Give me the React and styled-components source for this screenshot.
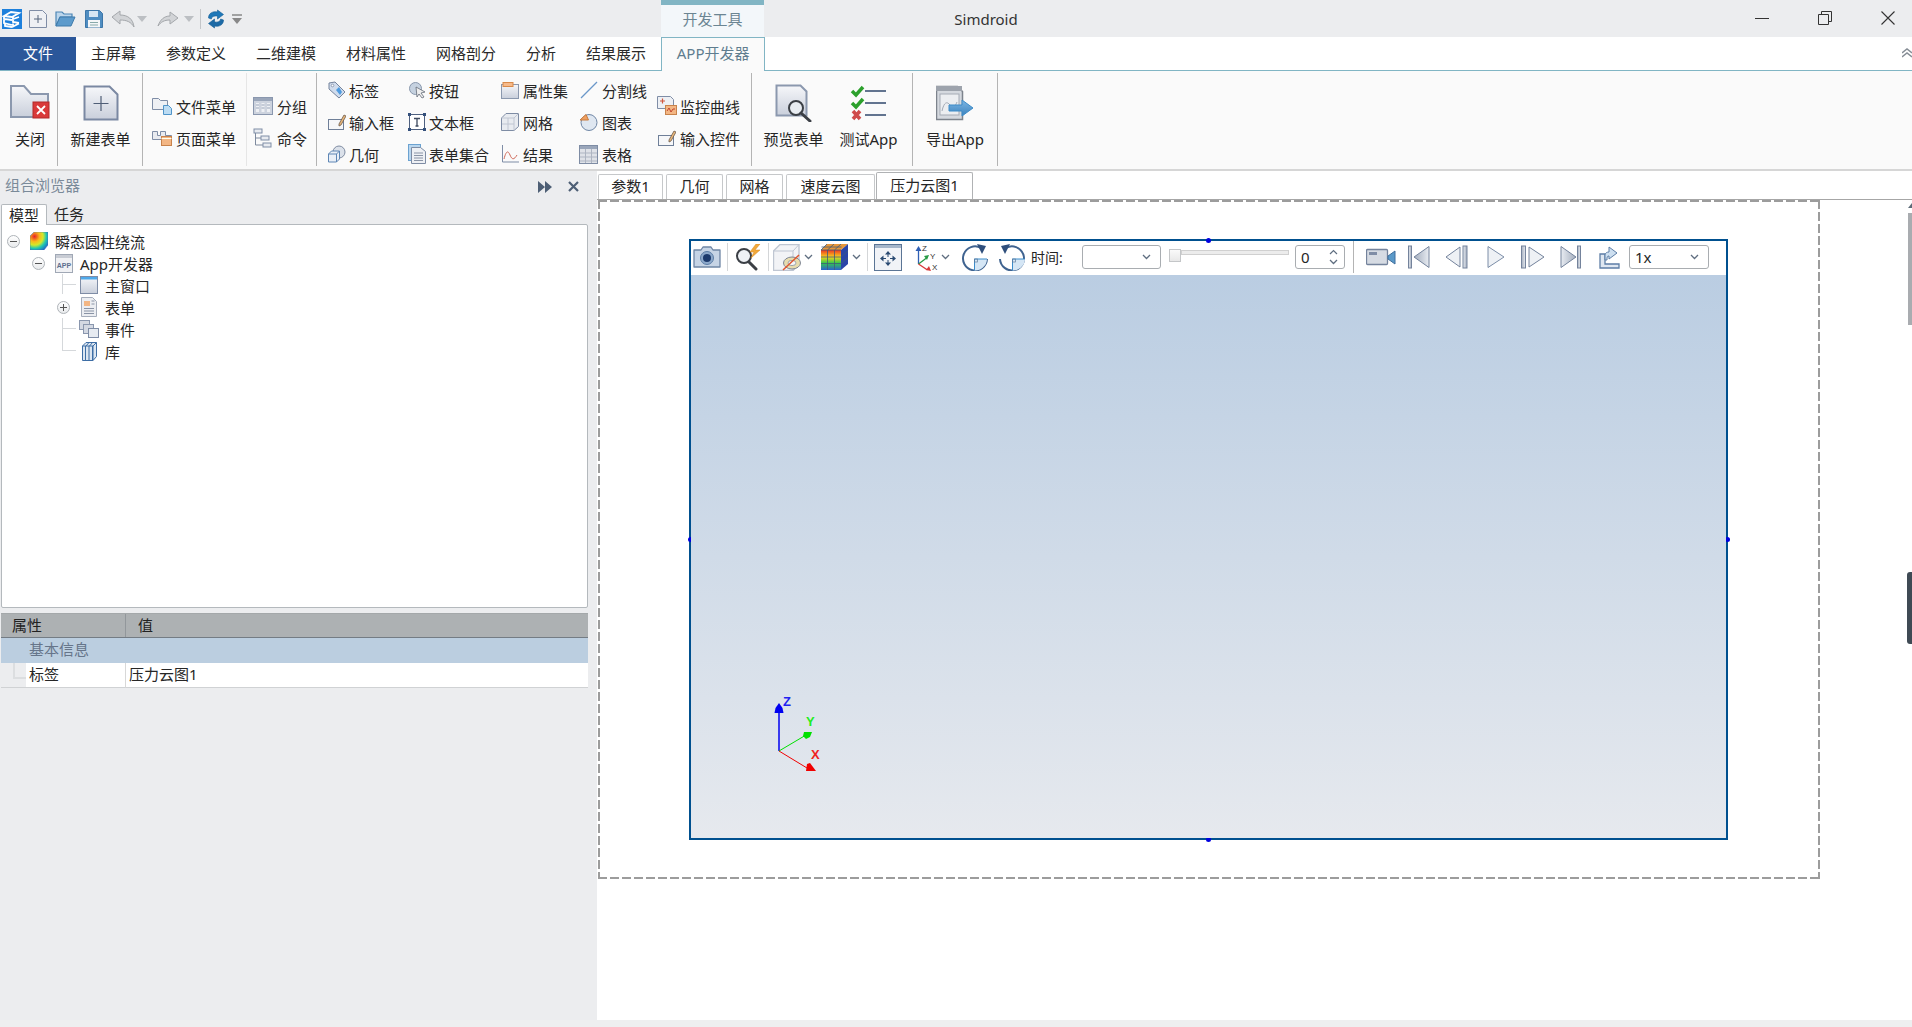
import React from 'react';
import styled, { createGlobalStyle } from 'styled-components';

const Global = createGlobalStyle`
  html, body { margin: 0; padding: 0; background: #fff; }
  body { font-family: "Noto Sans", "Noto Sans CJK SC", sans-serif; font-size: 15px; color: #262626; }
  svg { display: block; flex-shrink: 0; }
`;

const Root = styled.div`width:1912px;height:1027px;overflow:hidden;display:flex;flex-direction:column;background:#ecedef;`;

/* ---------- title bar ---------- */
const TitleBar = styled.div`height:37px;display:flex;background:#ecedef;flex-shrink:0;`;
const Qat = styled.div`width:661px;display:flex;align-items:center;padding:0 0 0 2px;box-sizing:border-box;`;
const QatItem = styled.div`margin-left:${p => p.$ml || 0}px;`;
const QatSep = styled.div`width:1px;height:20px;background:#c4c6c9;margin-left:6px;`;
const ContextTab = styled.div`width:103px;border-top:5px solid #81b5c4;background:#f3f7fa;color:#6b8592;display:flex;align-items:center;justify-content:center;font-size:15px;box-sizing:border-box;padding-bottom:6px;`;
const AppTitle = styled.div`width:444px;text-align:center;line-height:38px;font-size:15px;color:#333;`;
const WinControls = styled.div`margin-left:auto;display:flex;align-items:center;gap:49px;padding-right:17px;padding-top:0;height:36px;`;

/* ---------- menu tabs ---------- */
const MenuBar = styled.div`height:34px;background:#fff;display:flex;flex-shrink:0;border-bottom:1px solid #81b5c4;box-sizing:border-box;position:relative;`;
const FileTab = styled.div`width:76px;background:#2b579a;color:#fff;text-align:center;line-height:32px;height:33px;`;
const MenuTab = styled.div`padding:0 15px;line-height:32px;height:33px;color:#2a2a2a;`;
const ActiveTab = styled(MenuTab)`
  width:104px;padding:0;box-sizing:border-box;text-align:center;color:#5f7d8f;background:#fafafa;height:34px;
  border:1px solid #81b5c4;border-bottom:none;line-height:30px;
`;
const Collapse = styled.div`position:absolute;right:0;top:11px;`;

/* ---------- ribbon ---------- */
const Ribbon = styled.div`height:100px;background:#fafafa;display:flex;flex-shrink:0;border-bottom:2px solid #d6d6d6;box-sizing:border-box;`;
const Group = styled.div`width:${p => p.$w}px;padding-left:${p => p.$pl || 0}px;box-sizing:border-box;display:flex;flex-shrink:0;`;
const RibbonSep = styled.div`width:1px;margin:2px 0 3px;background:${p => p.$faint ? '#e6e6e6' : '#b4b4b4'};flex-shrink:0;`;
const LargeBtn = styled.div`
  width:${p => p.$w}px;display:flex;flex-direction:column;align-items:center;padding-top:12px;box-sizing:border-box;
`;
const LargeIcon = styled.div`height:40px;display:flex;align-items:center;justify-content:center;`;
const LargeLabel = styled.div`margin-top:6px;line-height:20px;white-space:nowrap;`;
const Stack = styled.div`
  width:${p => p.$w}px;display:flex;flex-direction:column;gap:12px;padding-top:${p => p.$three ? 9 : 25}px;flex-shrink:0;
`;
const SmallBtn = styled.div`display:flex;align-items:center;height:20px;white-space:nowrap;`;
const SmallIcon = styled.div`width:${p => p.$s || 19}px;margin-right:${p => p.$g || 3}px;display:flex;justify-content:center;`;

/* ---------- workspace ---------- */
const Main = styled.div`flex:1;display:flex;min-height:0;`;
const LeftPanel = styled.div`width:597px;flex-shrink:0;display:flex;flex-direction:column;background:#ecedef;`;
const PanelHead = styled.div`height:33px;display:flex;align-items:center;padding:0 0 6px 5px;box-sizing:border-box;color:#7a8a99;font-size:15px;`;
const PanelBtns = styled.div`margin-left:auto;display:flex;gap:16px;margin-right:18px;align-items:center;padding-top:4px;`;
const LeftTabs = styled.div`height:20px;display:flex;padding-left:1px;position:relative;z-index:1;`;
const LeftTab = styled.div`
  width:${p => p.$active ? 46 : 40}px;text-align:center;line-height:20px;box-sizing:border-box;
  ${p => p.$active ? 'background:#fff;border:1px solid #b4b9bd;border-bottom:none;border-radius:2px 2px 0 0;height:21px;' : 'padding-left:4px;'}
`;
const TreeBox = styled.div`
  margin-left:1px;width:587px;height:384px;box-sizing:border-box;background:#fff;border:1px solid #b4b9bd;border-radius:0 2px 2px 2px;padding-top:5px;
`;
const TreeRow = styled.div`height:22px;display:flex;align-items:center;padding-left:${p => 1 + p.$d * 25}px;white-space:nowrap;`;
const Slot = styled.div`
  width:20px;height:22px;position:relative;flex-shrink:0;display:flex;align-items:center;justify-content:center;
  ${p => p.$v && `&::before{content:"";position:absolute;left:9px;top:0;width:1px;height:${p.$v}px;background:#d5d8db;}`}
  ${p => p.$h && `&::after{content:"";position:absolute;left:9px;top:10px;width:14px;height:1px;background:#d5d8db;}`}
`;
const Expander = styled.div`
  width:13px;height:13px;border-radius:50%;border:1px solid #aeb3b8;background:linear-gradient(#fff,#e8eaec);box-sizing:border-box;position:relative;
  &::before{content:"";position:absolute;left:2px;right:2px;top:5px;height:1px;background:#555;}
  ${p => p.$plus && `&::after{content:"";position:absolute;top:2px;bottom:2px;left:5px;width:1px;background:#555;}`}
`;
const TreeIcon = styled.div`width:18px;margin-left:7px;margin-right:7px;display:flex;justify-content:center;`;

const PropTable = styled.div`margin:5px 0 0 1px;width:587px;display:flex;flex-direction:column;`;
const PropRow = styled.div`
  display:grid;grid-template-columns:125px 1fr;height:${p => p.$h || 25}px;line-height:22px;
`;
const PropHead = styled(PropRow)`background:#adb1b3;border-bottom:1px solid #747c84;border-top:1px solid #a4a8aa;box-sizing:border-box;`;
const HeadCell = styled.div`padding-left:${p => p.$pl}px;${p => p.$sep && 'border-right:1px solid #92979b;'}color:#222;`;
const PropGroup = styled.div`height:25px;background:#bbcee0;padding-left:28px;line-height:23px;color:#66758a;`;
const PropItem = styled(PropRow)`background:#fff;position:relative;`;
const PropKey = styled.div`
  padding-left:28px;border-right:1px solid #d8d8d8;position:relative;
  background:linear-gradient(to right,#ecedef 25px,#fff 25px);border-bottom:1px solid #d0d2d4;
  &::before{content:"";position:absolute;left:12px;top:0;width:11px;height:14px;border-left:2px solid #dcdee0;border-bottom:2px solid #dcdee0;}
`;
const PropVal = styled.div`padding-left:3px;border-bottom:1px solid #d0d2d4;`;

const RightPane = styled.div`flex:1;display:flex;flex-direction:column;background:#fff;position:relative;min-width:0;`;
const DocTabs = styled.div`height:29px;display:flex;align-items:flex-end;padding-left:1px;border-bottom:1px solid #a6a6a6;box-sizing:border-box;flex-shrink:0;`;
const DocTab = styled.div`
  width:${p => p.$w}px;margin-right:${p => p.$mr}px;box-sizing:border-box;text-align:center;background:#fff;
  height:${p => p.$active ? 27 : 25}px;line-height:${p => p.$active ? 25 : 23}px;border:1px solid #c6c8ca;border-bottom:none;border-radius:2px 2px 0 0;
  ${p => p.$active && 'border-color:#b0b2b4;'}
`;
const Canvas = styled.div`flex:1;padding-left:1px;`;
const dash = '#9c9c9c';
const Frame = styled.div`
  width:1222px;height:679px;box-sizing:border-box;padding:39px 0 0 91px;
  background-image:
    repeating-linear-gradient(to right,${dash} 0 9px,transparent 9px 12px),
    repeating-linear-gradient(to right,${dash} 0 9px,transparent 9px 12px),
    repeating-linear-gradient(to bottom,${dash} 0 9px,transparent 9px 12px),
    repeating-linear-gradient(to bottom,${dash} 0 9px,transparent 9px 12px);
  background-size:100% 2px,100% 2px,2px 100%,2px 100%;
  background-position:0 0,0 100%,0 0,100% 0;
  background-repeat:no-repeat;
`;
const Form = styled.div`
  width:1039px;height:601px;box-sizing:border-box;border:2px solid #00508f;position:relative;display:flex;flex-direction:column;
`;
const Handle = styled.div`
  position:absolute;width:5px;height:5px;border-radius:50%;background:#0000e0;
  ${p => p.$pos === 't' && 'left:50%;top:-3.5px;margin-left:-3px;'}
  ${p => p.$pos === 'b' && 'left:50%;bottom:-3.5px;margin-left:-3px;'}
  ${p => p.$pos === 'l' && 'top:50%;left:-3.5px;margin-top:-3px;'}
  ${p => p.$pos === 'r' && 'top:50%;right:-3.5px;margin-top:-3px;'}
`;
const ToolBar = styled.div`height:34px;box-sizing:border-box;padding:0 0 2px 2px;background:#fff;display:flex;align-items:center;flex-shrink:0;`;
const Tool = styled.div`margin-left:${p => p.$ml || 0}px;display:flex;align-items:center;`;
const ToolSep = styled.div`width:1px;height:${p => p.$full ? 32 : 28}px;background:${p => p.$full ? '#b4b4b4' : '#d4d6d8'};margin-left:${p => p.$ml}px;align-self:center;`;
const ToolLabel = styled.div`margin-left:${p => p.$ml}px;width:33px;font-size:14px;white-space:nowrap;color:#222;`;
const Combo = styled.div`
  margin-left:${p => p.$ml}px;width:${p => p.$w}px;height:24px;box-sizing:border-box;border:1px solid #a9adb1;border-radius:3px;background:#fff;
  display:flex;align-items:center;padding:0 9px 0 5px;justify-content:space-between;font-size:15px;
`;
const SpinArrows = styled.div`display:flex;flex-direction:column;gap:4px;margin-right:-3px;`;
const Slider = styled.div`margin-left:${p => p.$ml}px;width:120px;height:14px;position:relative;margin-top:-2px;`;
const Track = styled.div`position:absolute;left:12px;right:0;top:1px;height:3px;border:1px solid #d0d0d0;background:#ececec;`;
const Thumb = styled.div`position:absolute;left:0;top:0;width:12px;height:13px;box-sizing:border-box;border:1px solid #c4c6c8;background:linear-gradient(#fafafa,#e8e8e8);`;
const Plot = styled.div`flex:1;background:linear-gradient(#bacde2,#e6e9ee);position:relative;`;
const AxisMark = styled.div`position:absolute;left:74px;top:420px;`;
const ScrollThumb = styled.div`
  position:absolute;right:0;width:4px;top:${p => p.$top}px;height:${p => p.$h}px;background:${p => p.$c};
  ${p => p.$round && 'border-radius:3px 0 0 3px;width:5px;'}
`;
const ScrollArrow = styled.div`position:absolute;right:0;top:32px;width:0;height:0;border-left:4px solid transparent;border-bottom:5px solid #5d6b78;`;
const StatusBar = styled.div`height:7px;background:#eeeff0;flex-shrink:0;`;

/* ---------- icons ---------- */
const Svg = ({ w, h, children }) => <svg width={w} height={h} viewBox={`0 0 ${w} ${h}`}>{children}</svg>;
const OL = '#7f8da6';
const G = 'url(#gPage)';

const Defs = () => (
  <svg width="0" height="0" style={{ position: 'absolute' }}>
    <defs>
      <linearGradient id="gPage" x1="0" y1="0" x2="0" y2="1"><stop offset="0" stopColor="#f6f7fa" /><stop offset="1" stopColor="#c9cfdb" /></linearGradient>
      <linearGradient id="gBlue" x1="0" y1="0" x2="0" y2="1"><stop offset="0" stopColor="#7db6e4" /><stop offset="1" stopColor="#3c83bd" /></linearGradient>
      <linearGradient id="gSteel" x1="0" y1="0" x2="1" y2="0"><stop offset="0" stopColor="#e8ecf2" /><stop offset="1" stopColor="#a3adbd" /></linearGradient>
      <linearGradient id="gSteel2" x1="0" y1="0" x2="1" y2="0"><stop offset="0" stopColor="#a3adbd" /><stop offset="1" stopColor="#e8ecf2" /></linearGradient>
      <linearGradient id="gRain" x1="0" y1="0" x2="0" y2="1"><stop offset="0" stopColor="#ee3322" /><stop offset=".35" stopColor="#f5d31e" /><stop offset=".65" stopColor="#35c94a" /><stop offset="1" stopColor="#2a5fd0" /></linearGradient>
      <radialGradient id="gField" cx=".25" cy=".25" r=".95"><stop offset="0" stopColor="#e8202a" /><stop offset=".3" stopColor="#f9b91c" /><stop offset=".5" stopColor="#d3e92a" /><stop offset=".7" stopColor="#1fc8b0" /><stop offset="1" stopColor="#1c4fd0" /></radialGradient>
    </defs>
  </svg>
);

const Logo = () => <Svg w={20} h={20}><rect width="20" height="20" fill="#1d80dc" /><path d="M2 7l7-4 8 1-7 4zM2 7v3l8 1M2 11v3l8 2M3 15v2l7 1M11 8v2l6-2M11 11v2l6 1M11 14.500v3l6-3" fill="none" stroke="#fff" strokeWidth="1.800" /></Svg>;
const QNew = () => <Svg w={18} h={18}><path d="M.5.5h13l4 4v13H.5z" fill="#eef0f4" stroke={OL} /><path d="M9 5v8M5 9h8" stroke="#55647c" /></Svg>;
const QOpen = () => <Svg w={21} h={17}><path d="M1 16V2h6l2 2h8v3H5L1 16z" fill="#bcd6ec" stroke="#4c86b5" strokeWidth="1.200" /><path d="M1 16L5 7h15l-4 9z" fill="#5d9bcc" stroke="#3f7bab" /></Svg>;
const QSave = () => <Svg w={18} h={18}><path d="M.5.5h14l3 3v14H.5z" fill="#4f8dc1" stroke="#3c76a8" /><rect x="4" y="1" width="9" height="6" fill="#d7e6f3" /><rect x="3" y="10" width="12" height="7.500" fill="#f4f6f8" /><path d="M5 12.500h8M5 15h8" stroke="#8aa" /></Svg>;
const Undo = () => <Svg w={25} h={18}><path d="M1 7l8-6v4c8 0 13 4 14 12-3-5-7-7-14-7v4z" fill="#d2d4d7" stroke="#a4a7ab" /></Svg>;
const Redo = () => <Svg w={22} h={16}><g transform="translate(22 0) scale(-1 1)"><path d="M1 7l8-6v4c6 0 10 4 12 10-3-4-6-6-12-6v4z" fill="#d2d4d7" stroke="#a4a7ab" /></g></Svg>;
const DropTri = () => <Svg w={10} h={6}><path d="M0 0h10L5 6z" fill="#bcbfc3" /></Svg>;
const Refresh = () => <Svg w={18} h={20}><path d="M1.500 9c0-5 4.500-7 9-6V1l6 4.500-6 4.500V7C7 6.500 4.500 7.500 4.300 10z" fill="#1f78b8" stroke="#135d94" strokeWidth=".6" /><path d="M16.500 11c0 5-4.500 7-9 6v2l-6-4.500 6-4.500v3c3.500.5 6-.5 6.200-3z" fill="#1d6aa6" stroke="#135d94" strokeWidth=".6" /></Svg>;
const QMore = () => <Svg w={10} h={10}><path d="M0 1h10" stroke="#888" strokeWidth="1.500" /><path d="M0 4h10L5 10z" fill="#888" /></Svg>;
const WinMin = () => <Svg w={14} h={14}><path d="M0 7.500h14" stroke="#333" /></Svg>;
const WinMax = () => <Svg w={14} h={14}><path d="M.5 3.500h10v10H.5zM3.500 3.500V.5h10v10h-3" fill="none" stroke="#333" /></Svg>;
const WinClose = () => <Svg w={14} h={14}><path d="M.5.5l13 13M13.500.5l-13 13" stroke="#333" strokeWidth="1.100" /></Svg>;
const CollapseIc = () => <Svg w={10} h={10}><path d="M0 5l5-4 5 4M0 9l5-4 5 4" fill="none" stroke="#868d95" strokeWidth="1.400" /></Svg>;

const ICloseFolder = () => <Svg w={40} h={36}><path d="M1 1h13l7 8h17v23H1z" fill={G} stroke="#8b98ae" strokeWidth="2" /><rect x="23" y="17" width="16" height="16" fill="#d93a3a" stroke="#b12a2a" /><path d="M27 21l8 8M35 21l-8 8" stroke="#fff" strokeWidth="1.800" /></Svg>;
const INewForm = () => <Svg w={36} h={36}><path d="M1.500 1.500h25l8 8v25h-33z" fill={G} stroke="#7a88a2" strokeWidth="2" /><path d="M18 11v15M10.500 18.500h15" stroke="#4f5e76" strokeWidth="1.200" /></Svg>;
const IFileMenu = () => <Svg w={20} h={18}><path d="M.5 1.500h6l2 2h7v9H.5z" fill="#eef0f4" stroke={OL} /><path d="M11.500 8.500h5l3 3v6h-8z" fill="#bcdcf3" stroke="#4f94c9" /></Svg>;
const IPageMenu = () => <Svg w={20} h={16}><path d="M.5 1.500h5v4h3v-4h5v4h6v4h-19z" fill="#e8eaef" stroke={OL} /><rect x="9.500" y="6.500" width="10" height="9" fill="#f3b684" stroke="#c8834c" /><path d="M9.500 8.500h10" stroke="#ffe" /></Svg>;
const IGroup = () => <Svg w={20} h={20}><rect x=".5" y="1.500" width="19" height="17" fill="#cdd3de" stroke="#8a97ae" /><rect x="1" y="2" width="18" height="3" fill="#9aa6ba" /><path d="M3 7h3v9H3zM8.500 7h3v9h-3zM14 7h3v9h-3z" fill="#eef0f4" /><path d="M3 9h3M3 12h3M8.500 9h3M8.500 12h3M14 9h3M14 12h3" stroke="#9aa6ba" /></Svg>;
const ICommand = () => <Svg w={20} h={20}><path d="M2.500 5v12h8M2.500 10h6" fill="none" stroke="#7e8a9e" /><rect x="1" y="1" width="8" height="4" fill="#e8ebf0" stroke={OL} /><rect x="8" y="8" width="8" height="4" fill="#e8ebf0" stroke={OL} /><rect x="10" y="15" width="8" height="4" fill="#e8ebf0" stroke={OL} /></Svg>;
const ITag = () => <Svg w={18} h={18}><path d="M1 2l6-1 10 10-6 6L1 8z" fill="#d0dced" stroke="#74839c" /><circle cx="4.500" cy="4.500" r="1.300" fill="#fff" stroke="#74839c" strokeWidth=".7" /><path d="M8 9l3-3 3 5-2 3z" fill="#4f9be0" /></Svg>;
const ICursor = () => <Svg w={18} h={18}><circle cx="7.500" cy="7.500" r="6" fill="#c6d2e0" stroke="#8897ac" /><path d="M8 6l9 5-4 1 3 4-2 1-3-4-2 3z" fill="#eee" stroke="#636b77" strokeWidth=".8" /></Svg>;
const IProp = () => <Svg w={18} h={17}><rect x=".5" y="2.500" width="17" height="14" fill={G} stroke="#8b98ae" /><rect x="2" y="0.500" width="10" height="4" fill="#f6ba8b" stroke="#d88a4a" /></Svg>;
const IDivider = () => <Svg w={18} h={18}><path d="M1 17L17 1" stroke="#6a97c9" strokeWidth="1.200" /></Svg>;
const IInput = () => <Svg w={18} h={16}><rect x=".5" y="5.500" width="15" height="10" fill="#f6f7f9" stroke="#6f7f98" /><path d="M11 10l5-9 2 1-5 9-2 1z" fill="#e9b67a" stroke="#6b5a4d" strokeWidth=".8" /></Svg>;
const ITextBox = () => <Svg w={18} h={18}><rect x="1.500" y="1.500" width="15" height="15" fill="#fff" stroke="#4e6080" /><rect width="3" height="3" fill="#34507c" /><rect x="15" width="3" height="3" fill="#34507c" /><rect y="15" width="3" height="3" fill="#34507c" /><rect x="15" y="15" width="3" height="3" fill="#34507c" /><path d="M6 5.500h6M9 5.500v7.500M7.500 13h3" stroke="#3e4a5f" strokeWidth="1.300" fill="none" /></Svg>;
const IMesh = () => <Svg w={18} h={18}><path d="M.5 5L5 .5h12.500v13L13 17.500H.5z" fill="#e8ebf0" stroke="#7e8ca4" /><path d="M.5 5H13v12.500M13 5l4.500-4.500M1 11h12M7 5v12" fill="none" stroke="#c0c6d2" /></Svg>;
const IPie = () => <Svg w={19} h={18}><circle cx="10" cy="9.500" r="8" fill="#dfe7f1" stroke="#6f86a5" /><path d="M1 7L7 1.500 9.500 7z" fill="#f0a060" stroke="#c77a3e" /></Svg>;
const IGeom = () => <Svg w={19} h={18}><circle cx="12" cy="7" r="6" fill="#dbe1ea" stroke="#7f8ca2" /><path d="M1.500 9l3-3h8v8l-3 3h-8z" fill="#e9eff7" stroke="#5e86b5" /><path d="M1.500 9h8v8M9.500 9l3-3" fill="none" stroke="#5e86b5" /></Svg>;
const IFormSet = () => <Svg w={18} h={20}><rect x=".5" y=".5" width="12" height="16" fill="#b9d6ee" stroke="#6ba2d1" /><path d="M3.500 3.500h9l5 4v12h-14z" fill="#eef0f4" stroke="#7e8ca4" /><path d="M6 9h9M6 11.500h9M6 14h9M6 16.500h9" stroke="#8a94a6" /></Svg>;
const IChart = () => <Svg w={18} h={18}><path d="M1.500 0v17H18" fill="none" stroke="#7f8da6" /><path d="M3 14c2-8 4-9 6-4s4 5 7 0" fill="none" stroke="#d06a5a" /></Svg>;
const ITable = () => <Svg w={19} h={19}><rect x=".5" y=".5" width="18" height="18" fill="#dfe2e8" stroke="#7e8ca4" /><rect x="1" y="1" width="17" height="3" fill="#9aa6ba" /><path d="M1 8h17M1 12h17M1 16h17M6.500 4v14M12.500 4v14" stroke="#aeb5c2" /></Svg>;
const IMonitor = () => <Svg w={20} h={20}><path d="M.5.5h13l3 3v9H.5z" fill="#eef0f4" stroke={OL} /><path d="M3 5h5M5.500 2.500v5" stroke="#d0563c" strokeWidth="1.200" /><rect x="8.500" y="9.500" width="11" height="9" fill="#f3b684" stroke="#c8834c" /><path d="M10 15l2-3 2 4 2-3h2" fill="none" stroke="#c0442c" /></Svg>;
const IPreview = () => <Svg w={37} h={38}><path d="M1.500 1.500h24l6 6v24h-30z" fill={G} stroke="#8b98ae" strokeWidth="2" /><circle cx="21" cy="24" r="7" fill="#e8ecf1" stroke="#3b3f45" strokeWidth="2" /><path d="M26 29l9 8" stroke="#3b3f45" strokeWidth="3" strokeLinecap="round" /></Svg>;
const ITest = () => <Svg w={37} h={36}><path d="M15 6h21M15 18h21M15 30h21" stroke="#62748f" strokeWidth="2" /><path d="M2 6l4 4 7-8" fill="none" stroke="#2ca02c" strokeWidth="3.500" /><path d="M2 18l4 4 7-8" fill="none" stroke="#2ca02c" strokeWidth="3.500" /><path d="M3 26l7 8M10 26l-7 8" stroke="#cf4a4a" strokeWidth="3.500" /></Svg>;
const IExport = () => <Svg w={38} h={36}><path d="M.5 1.500h21l5 5v28H.5z" fill="#d5d9df" stroke="#7d838c" strokeWidth="1.500" /><rect x="0" y="1" width="26" height="5" fill="#9da3ac" /><rect x="4" y="9" width="19" height="21" fill="#eceef1" stroke="#a5abb5" /><path d="M6 26c2-9 5-10 8-6s5 2 7-3" fill="none" stroke="#a3aab5" /><path d="M13 20h13v-5l11 8-11 8v-5H13z" fill="url(#gBlue)" stroke="#3d8cc9" /></Svg>;

const TField = () => <Svg w={18} h={18}><path d="M4 0h14v13l-4 5H0V4z" fill="url(#gField)" stroke="#4a6bb0" strokeWidth=".5" /></Svg>;
const TApp = () => <Svg w={18} h={19}><rect x=".5" y=".5" width="17" height="18" fill="#f0f1f4" stroke="#a0a8b5" /><rect x="1" y="1" width="16" height="3" fill="#c8ccd4" /><text x="9" y="14" textAnchor="middle" fontSize="7" fontWeight="700" fontFamily="Liberation Sans" fill="#5d6f8f">APP</text></Svg>;
const TWindow = () => <Svg w={18} h={18}><rect x=".5" y=".5" width="17" height="17" fill={G} stroke="#7f8da6" /><rect x="1" y="1" width="16" height="2.500" fill="#4fa9ea" /></Svg>;
const TForm = () => <Svg w={16} h={20}><path d="M.5.5h11l4 4v15H.5z" fill="#eceef2" stroke="#a5adbb" /><rect x="3" y="4" width="6" height="5" fill="#f3b684" /><path d="M10.500 4h3M10.500 7h3M3 11.500h10M3 14h10M3 16.500h10" stroke="#8a94a6" /></Svg>;
const TEvent = () => <Svg w={20} h={18}><rect x=".5" y=".5" width="10" height="9" fill="#d3d8e2" stroke="#8a97ae" /><rect x="4.500" y="4.500" width="10" height="9" fill="#d3d8e2" stroke="#8a97ae" /><rect x="9.500" y="8.500" width="10" height="9" fill="#e7ebf1" stroke="#7f8da6" /></Svg>;
const TLib = () => <Svg w={15} h={19}><path d="M.5 4L4 .5h10.500v14L11 18.500H.5z" fill="#dce6f1" stroke="#3e6ea5" /><path d="M3.500 4v14.500M7 4v14.500M10.500 4v14.500M.5 4H11v14.500M11 4l3.500-3.500M4 4l3-3.500M7.500 4l3-3.500" fill="none" stroke="#3e6ea5" /></Svg>;

const TCamera = () => <Svg w={28} h={22}><path d="M1 4h7l2-3h8l2 3h7v17H1z" fill="#c6d4e5" stroke="#6f86a5" strokeWidth="1.300" strokeLinejoin="round" /><circle cx="14" cy="12" r="6.500" fill="#8da9cb" stroke="#5c7ea6" /><circle cx="14" cy="12" r="4" fill="#1c3a6c" /></Svg>;
const TMag = () => <Svg w={29} h={27}><circle cx="10" cy="12" r="7" fill="#eef1f5" stroke="#3b3f45" strokeWidth="2" /><path d="M15 18l7 7" stroke="#3b3f45" strokeWidth="3" strokeLinecap="round" /><path d="M22 0l-6 8h4l-3 6 9-8h-5l5-6z" fill="#f2a93b" stroke="#d68a20" strokeWidth=".5" /></Svg>;
const TCube = () => <Svg w={28} h={27}><path d="M.5 7L7 .5h19v20l-6 6H.5z" fill="#f2f3f6" stroke="#bfc6d2" strokeWidth="1.400" /><path d="M.5 7H20v19.500M20 7l6-6.500" fill="none" stroke="#bfc6d2" /><ellipse cx="19" cy="19" rx="8.500" ry="6" fill="#e7dcae" stroke="#7f8694" /><ellipse cx="19" cy="19" rx="4" ry="2.600" fill="#f5f6f8" stroke="#7f8694" strokeWidth=".7" /><path d="M10 26L26 11" stroke="#e0562e" strokeWidth="1.500" /></Svg>;
const Chev = () => <Svg w={9} h={6}><path d="M1 1l3.500 3.500L8 1" fill="none" stroke="#5f6e80" strokeWidth="1.300" /></Svg>;
const TColor = () => <Svg w={27} h={26}><path d="M0 6h20v20H0z" fill="url(#gRain)" /><path d="M0 6l6-6h21L20 6z" fill="#e7973a" /><path d="M20 6l7-6v20l-7 6z" fill="#2a45a8" /><path d="M0 6h20M0 13h20M0 19.500h20M6.500 6v20M13.500 6v20M6 0L0 6M13 0L6.500 6M20 0l-6.500 6M.5 3h20M20 13l7-6M20 19.500l7-6" stroke="#3f5c78" strokeWidth=".8" fill="none" /></Svg>;
const TMove = () => <Svg w={28} h={27}><rect x=".5" y=".5" width="27" height="26" fill="#f1f3f7" stroke="#5b7595" /><rect x="1" y="1" width="26" height="3" fill="#a5b6ca" /><path d="M14 7l-3 3.500h6zM14 22l-3-3.500h6zM6 14.500l3.500-3v6zM22 14.500l-3.500-3v6z" fill="#2a4a72" /><path d="M14 10v3M14 16v3M9 14.500h3M16 14.500h3" stroke="#2a4a72" /></Svg>;
const TAxes = () => (
  <Svg w={24} h={27}>
    <path d="M3.500 20V5" stroke="#2f5fb5" strokeWidth="1.300" /><path d="M3.500 2l-3 5h6z" fill="#2f5fb5" />
    <path d="M3.500 20l8-6" stroke="#269a45" strokeWidth="1.300" /><path d="M14 11l-5 1 3 4z" fill="#269a45" />
    <path d="M3.500 20l9 6" stroke="#d83a3a" strokeWidth="1.300" /><path d="M16 27l-5-1 3-4z" fill="#d83a3a" />
    <text x="7" y="7" fontSize="8" fontFamily="Liberation Sans" fill="#333">Z</text>
    <text x="15" y="15" fontSize="8" fontFamily="Liberation Sans" fill="#333">Y</text>
    <text x="17" y="26" fontSize="8" fontFamily="Liberation Sans" fill="#333">X</text>
  </Svg>
);
const TRotCw = () => <Svg w={27} h={27}><path d="M20 4a12 12 0 1 0 6 11" fill="none" stroke="#3f6390" strokeWidth="2" /><path d="M16 0l9 2-4 8z" fill="#2f4f7c" /><path d="M13.500 15H26a12 12 0 0 1-12.500 11.500z" fill="#d5e6f5" /><path d="M13.500 15H26M13.500 15v11.500" stroke="#3a8ccb" /><rect x="13.500" y="15" width="3" height="3" fill="none" stroke="#5e7a9b" strokeWidth=".7" /></Svg>;
const TRotCcw = () => <Svg w={27} h={27}><path d="M7 4a12 12 0 1 1-6 11" fill="none" stroke="#3f6390" strokeWidth="2" /><path d="M11 0L2 2l4 8z" fill="#2f4f7c" /><path d="M13.500 15H26a12 12 0 0 1-12.500 11.500z" fill="#d5e6f5" /><path d="M13.500 15H26M13.500 15v11.500" stroke="#3a8ccb" /><rect x="13.500" y="15" width="3" height="3" fill="none" stroke="#5e7a9b" strokeWidth=".7" /></Svg>;
const TVideo = () => <Svg w={30} h={18}><rect x=".5" y="1.500" width="21" height="15" rx="1" fill="#d6dbe3" stroke="#74839c" strokeWidth="1.300" /><rect x="3" y="4" width="8" height="3" fill="#7f8da6" /><path d="M22 8l7-5v13l-7-5z" fill="#5b9ac9" stroke="#3f6f9e" /></Svg>;
const TFirst = () => <Svg w={22} h={24}><rect x=".5" y="1" width="3" height="22" fill="url(#gSteel)" stroke="#74839c" /><path d="M21 1.500v21L6 12z" fill="url(#gSteel2)" stroke="#74839c" /></Svg>;
const TPrev = () => <Svg w={23} h={24}><path d="M15 2v20L1 12z" fill="#eef1f5" stroke="#74839c" /><rect x="18" y="1" width="4" height="22" fill="url(#gSteel)" stroke="#74839c" /></Svg>;
const TPlay = () => <Svg w={18} h={24}><path d="M1 1.500v21L17 12z" fill="#eef1f5" stroke="#7c8ea8" /></Svg>;
const TNext = () => <Svg w={24} h={24}><rect x=".5" y="1" width="4" height="22" fill="url(#gSteel2)" stroke="#74839c" /><path d="M8 2v20l15-10z" fill="#eef1f5" stroke="#74839c" /></Svg>;
const TLast = () => <Svg w={21} h={24}><path d="M1 1.500v21L16 12z" fill="url(#gSteel)" stroke="#74839c" /><rect x="17.500" y="1" width="3" height="22" fill="url(#gSteel2)" stroke="#74839c" /></Svg>;
const TExport = () => <Svg w={23} h={24}><path d="M2 9h5v10h14v4H2z" fill="#dfe7f1" stroke="#5d7ea6" strokeWidth="1.300" /><path d="M7 15v-5c0-2 2-3 4-3V2l8 6-8 6v-3c-2 0-2 1-2 4z" fill="#cddff0" stroke="#5d7ea6" /></Svg>;
const PanelPin = () => <Svg w={14} h={12}><path d="M0 0l7 6-7 6zM7 0l7 6-7 6z" fill="#4e5f75" /></Svg>;
const PanelX = () => <Svg w={11} h={11}><path d="M1 1l9 9M10 1l-9 9" stroke="#4e5f75" strokeWidth="2.200" /></Svg>;
const UpChev = () => <Svg w={9} h={6}><path d="M1 5l3.500-3.500L8 5" fill="none" stroke="#5f6e80" strokeWidth="1.200" /></Svg>;

const Axis = () => (
  <Svg w={60} h={85}>
    <path d="M14 56V16" stroke="#0000f0" strokeWidth="1.500" />
    <path d="M14 8l-3.500 5-1 5h9l-1-5z" fill="#0000f0" />
    <path d="M14 56l27-16" stroke="#00e000" strokeWidth="1" />
    <path d="M39 37h8l-2 5-4 2-3-3z" fill="#00e000" />
    <path d="M14 56l28 17" stroke="#f00000" strokeWidth="1" />
    <path d="M42 69l3-1 6 8h-10z" fill="#f00000" />
    <text x="18" y="11" fontSize="13" fontWeight="700" fontFamily="Liberation Sans" fill="#2222f0">Z</text>
    <text x="41" y="31" fontSize="13" fontWeight="700" fontFamily="Liberation Sans" fill="#22ee22">Y</text>
    <text x="46" y="64" fontSize="13" fontWeight="700" fontFamily="Liberation Sans" fill="#f02222">X</text>
  </Svg>
);

/* ---------- data ---------- */
const menus = ['主屏幕', '参数定义', '二维建模', '材料属性', '网格剖分', '分析', '结果展示'];
const docTabs = [
  { t: '参数1', w: 65, mr: 3 }, { t: '几何', w: 57, mr: 3 }, { t: '网格', w: 57, mr: 3 },
  { t: '速度云图', w: 89, mr: 1 }, { t: '压力云图1', w: 97, mr: 0, active: true },
];
const cols = [
  { w: 80, items: [['标签', ITag], ['输入框', IInput], ['几何', IGeom]] },
  { w: 93, items: [['按钮', ICursor], ['文本框', ITextBox], ['表单集合', IFormSet]] },
  { w: 79, items: [['属性集', IProp], ['网格', IMesh], ['结果', IChart]] },
  { w: 78, items: [['分割线', IDivider], ['图表', IPie], ['表格', ITable]] },
];
const Small = ({ text, Icon, s, g }) => <SmallBtn><SmallIcon $s={s} $g={g}><Icon /></SmallIcon>{text}</SmallBtn>;
const Large = ({ text, Icon, w }) => <LargeBtn $w={w}><LargeIcon><Icon /></LargeIcon><LargeLabel>{text}</LargeLabel></LargeBtn>;

export default function App() {
  return (
    <Root>
      <Global />
      <Defs />
      <TitleBar>
        <Qat>
          <QatItem><Logo /></QatItem>
          <QatItem $ml={7}><QNew /></QatItem>
          <QatItem $ml={8}><QOpen /></QatItem>
          <QatItem $ml={9}><QSave /></QatItem>
          <QatItem $ml={8}><Undo /></QatItem>
          <QatItem $ml={1}><DropTri /></QatItem>
          <QatItem $ml={10}><Redo /></QatItem>
          <QatItem $ml={5}><DropTri /></QatItem>
          <QatSep />
          <QatItem $ml={6}><Refresh /></QatItem>
          <QatItem $ml={7}><QMore /></QatItem>
        </Qat>
        <ContextTab>开发工具</ContextTab>
        <AppTitle>Simdroid</AppTitle>
        <WinControls><WinMin /><WinMax /><WinClose /></WinControls>
      </TitleBar>

      <MenuBar>
        <FileTab>文件</FileTab>
        {menus.map(m => <MenuTab key={m}>{m}</MenuTab>)}
        <ActiveTab>APP开发器</ActiveTab>
        <Collapse><CollapseIc /></Collapse>
      </MenuBar>

      <Ribbon>
        <Group $w={57} $pl={3}><Large text="关闭" Icon={ICloseFolder} w={54} /></Group>
        <RibbonSep />
        <Group $w={84} $pl={1}><Large text="新建表单" Icon={INewForm} w={83} /></Group>
        <RibbonSep />
        <Group $w={103} $pl={9}>
          <Stack $w={94}>
            <Small text="文件菜单" Icon={IFileMenu} s={20} g={4} />
            <Small text="页面菜单" Icon={IPageMenu} s={20} g={4} />
          </Stack>
        </Group>
        <RibbonSep $faint />
        <Group $w={69} $pl={6}>
          <Stack $w={60}>
            <Small text="分组" Icon={IGroup} s={20} g={4} />
            <Small text="命令" Icon={ICommand} s={20} g={4} />
          </Stack>
        </Group>
        <RibbonSep />
        <Group $w={434} $pl={10}>
          {cols.map(c => (
            <Stack key={c.w + c.items[0][0]} $w={c.w} $three>
              {c.items.map(([t, Ic]) => <Small key={t} text={t} Icon={Ic} g={c.w === 78 || c.w === 79 ? 4 : 3} />)}
            </Stack>
          ))}
          <Stack $w={90}>
            <Small text="监控曲线" Icon={IMonitor} s={20} g={3} />
            <Small text="输入控件" Icon={IInput} s={20} g={3} />
          </Stack>
        </Group>
        <RibbonSep />
        <Group $w={160} $pl={4}>
          <Large text="预览表单" Icon={IPreview} w={75} />
          <Large text="测试App" Icon={ITest} w={75} />
        </Group>
        <RibbonSep />
        <Group $w={84}><Large text="导出App" Icon={IExport} w={84} /></Group>
        <RibbonSep />
      </Ribbon>

      <Main>
        <LeftPanel>
          <PanelHead>
            组合浏览器
            <PanelBtns><PanelPin /><PanelX /></PanelBtns>
          </PanelHead>
          <LeftTabs>
            <LeftTab $active>模型</LeftTab>
            <LeftTab>任务</LeftTab>
          </LeftTabs>
          <TreeBox>
            <TreeRow $d={0}><Slot><Expander /></Slot><TreeIcon><TField /></TreeIcon>瞬态圆柱绕流</TreeRow>
            <TreeRow $d={1}><Slot><Expander /></Slot><TreeIcon><TApp /></TreeIcon>App开发器</TreeRow>
            <TreeRow $d={2}><Slot $v={20} $h /><TreeIcon><TWindow /></TreeIcon>主窗口</TreeRow>
            <TreeRow $d={2}><Slot><Expander $plus /></Slot><TreeIcon><TForm /></TreeIcon>表单</TreeRow>
            <TreeRow $d={2}><Slot $v={22} $h /><TreeIcon><TEvent /></TreeIcon>事件</TreeRow>
            <TreeRow $d={2}><Slot $v={11} $h /><TreeIcon><TLib /></TreeIcon>库</TreeRow>
          </TreeBox>
          <PropTable>
            <PropHead>
              <HeadCell $pl={11} $sep>属性</HeadCell>
              <HeadCell $pl={12}>值</HeadCell>
            </PropHead>
            <PropGroup>基本信息</PropGroup>
            <PropItem>
              <PropKey>标签</PropKey>
              <PropVal>压力云图1</PropVal>
            </PropItem>
          </PropTable>
        </LeftPanel>

        <RightPane>
          <DocTabs>
            {docTabs.map(t => <DocTab key={t.t} $w={t.w} $mr={t.mr} $active={t.active}>{t.t}</DocTab>)}
          </DocTabs>
          <Canvas>
            <Frame>
              <Form>
                <Handle $pos="t" /><Handle $pos="b" /><Handle $pos="l" /><Handle $pos="r" />
                <ToolBar>
                  <Tool><TCamera /></Tool>
                  <ToolSep $ml={6} />
                  <Tool $ml={6}><TMag /></Tool>
                  <ToolSep $ml={5} />
                  <Tool $ml={4}><TCube /></Tool>
                  <Tool $ml={3}><Chev /></Tool>
                  <Tool $ml={8}><TColor /></Tool>
                  <Tool $ml={4}><Chev /></Tool>
                  <ToolSep $ml={6} />
                  <Tool $ml={6}><TMove /></Tool>
                  <Tool $ml={13}><TAxes /></Tool>
                  <Tool $ml={2}><Chev /></Tool>
                  <Tool $ml={11}><TRotCw /></Tool>
                  <Tool $ml={11}><TRotCcw /></Tool>
                  <ToolLabel $ml={5}>时间:</ToolLabel>
                  <Combo $ml={18} $w={79}><span /><Chev /></Combo>
                  <Slider $ml={8}><Track /><Thumb /></Slider>
                  <Combo $ml={6} $w={50}>0<SpinArrows><UpChev /><Chev /></SpinArrows></Combo>
                  <ToolSep $ml={8} $full />
                  <Tool $ml={12}><TVideo /></Tool>
                  <Tool $ml={12}><TFirst /></Tool>
                  <Tool $ml={15}><TPrev /></Tool>
                  <Tool $ml={19}><TPlay /></Tool>
                  <Tool $ml={16}><TNext /></Tool>
                  <Tool $ml={15}><TLast /></Tool>
                  <Tool $ml={17}><TExport /></Tool>
                  <Combo $ml={8} $w={80}>1x<Chev /></Combo>
                </ToolBar>
                <Plot>
                  <AxisMark><Axis /></AxisMark>
                </Plot>
              </Form>
            </Frame>
          </Canvas>
          <ScrollArrow />
          <ScrollThumb $top={42} $h={112} $c="#a9acb0" />
          <ScrollThumb $top={401} $h={72} $c="#3f4a54" $round />
        </RightPane>
      </Main>
      <StatusBar />
    </Root>
  );
}
